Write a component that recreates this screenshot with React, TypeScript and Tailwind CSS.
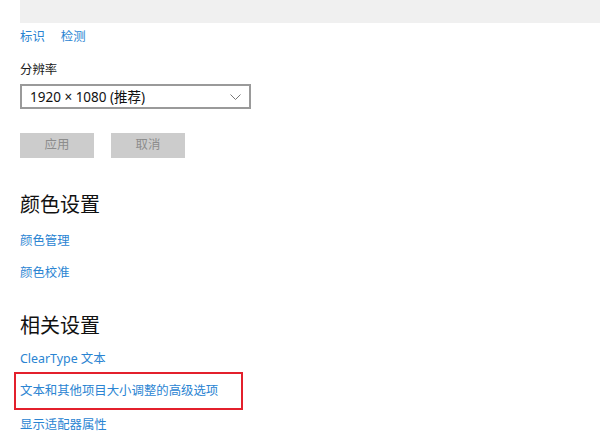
const font = { fontFamily: '"Noto Sans", "Noto Sans CJK SC", sans-serif' };

function LinkRow({ children, className = '' }: { children: React.ReactNode; className?: string }) {
  return (
    <div className={`h-[18px] flex items-center text-[12.4px] leading-[18px] text-[#2a84d2] ${className}`}>
      {children}
    </div>
  );
}

export default function App() {
  return (
    <div className="w-[600px] h-[448px] bg-white overflow-hidden flex flex-col" style={font}>
      <div className="ml-[20px] h-[23px] bg-[#f0f0f0] shrink-0" />

      <div className="pl-[20px] flex flex-col">
        <div className="mt-[5px] h-[18px] flex items-center gap-[16px] text-[12.4px] leading-[18px] text-[#2a84d2]">
          <span>标识</span>
          <span>检测</span>
        </div>

        <div className="mt-[15px] h-[18px] flex items-center text-[12.4px] leading-[18px] text-[#1a1a1a]">分辨率</div>

        <div className="mt-[5px] w-[231px] h-[25px] border-2 border-[#9a9a9a] flex items-center justify-between pl-[8px] pr-[8px]">
          <span className="text-[13.5px] leading-[18px] text-[#111]">1920 × 1080 (推荐)</span>
          <svg width="11" height="6" viewBox="0 0 11 6" fill="none" stroke="#777" strokeWidth="1">
            <path d="M0.5 0.5 L5.5 5.5 L10.5 0.5" />
          </svg>
        </div>

        <div className="mt-[24px] flex gap-[17px]">
          <div className="w-[74px] h-[25px] bg-[#cccccc] flex items-center justify-center text-[12.4px] text-[#8c8c8c]">应用</div>
          <div className="w-[74px] h-[25px] bg-[#cccccc] flex items-center justify-center text-[12.4px] text-[#8c8c8c]">取消</div>
        </div>

        <h2 className="mt-[33px] h-[28px] flex items-center text-[20px] leading-[28px] text-[#111]">颜色设置</h2>
        <LinkRow className="mt-[13px]">颜色管理</LinkRow>
        <LinkRow className="mt-[14px]">颜色校准</LinkRow>

        <h2 className="mt-[30px] h-[28px] flex items-center text-[20px] leading-[28px] text-[#111]">相关设置</h2>
        <LinkRow className="mt-[10px]">ClearType 文本</LinkRow>
        <div className="mt-[4px] -ml-[6px] w-[229px] h-[38px] border-2 border-[#e3202c] pl-[4px] flex items-center text-[12.4px] leading-[18px] text-[#2a84d2]">
          文本和其他项目大小调整的高级选项
        </div>
        <LinkRow className="mt-[6px]">显示适配器属性</LinkRow>
      </div>
    </div>
  );
}
